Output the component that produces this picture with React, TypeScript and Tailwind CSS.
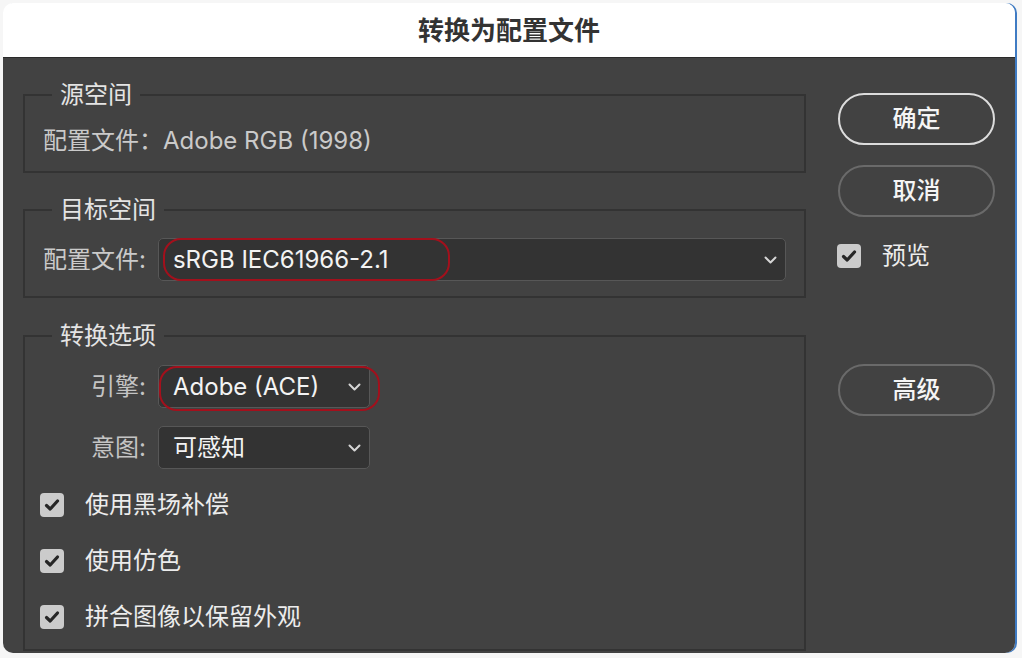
const Chevron = () => (
  <svg width="13" height="8" viewBox="0 0 13 8" fill="none" className="shrink-0">
    <path d="M1.5 1.5 L6.5 6.5 L11.5 1.5" stroke="#d6d6d6" strokeWidth="2" strokeLinecap="round" strokeLinejoin="round" />
  </svg>
);

function Check() {
  return (
    <span className="flex h-[24px] w-[24px] shrink-0 items-center justify-center rounded-[4px] bg-[#cbcbcb]">
      <svg width="16" height="14" viewBox="0 0 16 14" fill="none">
        <path d="M2.5 7.5 L6.2 11 L13.5 3" stroke="#262626" strokeWidth="3.2" strokeLinecap="round" strokeLinejoin="round" />
      </svg>
    </span>
  );
}

function Select({ value, className = "" }: { value: string; className?: string }) {
  return (
    <div className={`flex h-[43px] items-center rounded-[5px] border-[1.5px] border-[#575757] bg-[#333333] pl-[14px] pr-[8px] text-[#f3f3f3] ${className}`}>
      <span className="flex-1 whitespace-nowrap">{value}</span>
      <Chevron />
    </div>
  );
}

function Legend({ children }: { children: React.ReactNode }) {
  return <legend className="ml-[27px] px-2 leading-[26px] text-[#e4e4e4]">{children}</legend>;
}

function CheckRow({ label, className = "" }: { label: string; className?: string }) {
  return (
    <div className={`flex items-center gap-[21px] leading-[26px] text-[#ececec] ${className}`}>
      <Check />
      <span>{label}</span>
    </div>
  );
}

function PillButton({ label, primary }: { label: string; primary?: boolean }) {
  return (
    <button
      className={`flex h-[52px] w-full items-center justify-center rounded-full border-2 font-medium text-[#f5f5f5] ${
        primary ? "border-[#dcdcdc]" : "border-[#6a6a6a]"
      }`}
    >
      {label}
    </button>
  );
}

export default function App() {
  return (
    <div className="h-[658px] w-[1022px] bg-[#f6f6f6] pl-[3px] pt-[3px] font-['Inter','Noto_Sans_CJK_SC',sans-serif] text-[24px]">
      <div className="flex h-[650px] w-[1012px] flex-col overflow-hidden rounded-[10px] shadow-[2px_0_0_#3f7bc3]">
        <div className="flex h-[55px] shrink-0 items-center justify-center border-b border-[#2a2a2a] bg-white">
          <h1 className="text-[26px] font-bold text-[#333]">转换为配置文件</h1>
        </div>

        <div className="flex flex-1 bg-[#424242] px-[20px] pt-[24px]">
          {/* left column */}
          <div className="w-[783px] shrink-0">
            <fieldset className="border-2 border-[#333] pb-[17px]">
              <Legend>源空间</Legend>
              <div className="pl-[18px] pt-[20px] leading-[26px] text-[#cacaca]">配置文件：Adobe RGB (1998)</div>
            </fieldset>

            <fieldset className="mt-[24px] border-2 border-[#333] pb-[15px]">
              <Legend>目标空间</Legend>
              <div className="flex items-center gap-[12px] pl-[18px] pr-[18px] pt-[15px]">
                <span className="leading-[26px] text-[#cacaca]">配置文件:</span>
                <div className="relative flex-1">
                  <Select value="sRGB IEC61966-2.1" />
                  <span className="absolute left-[5px] top-0 h-[43px] w-[287px] rounded-[18px] border-2 border-[#a3101c]" />
                </div>
              </div>
            </fieldset>

            <fieldset className="mt-[25px] border-2 border-[#333] pb-[19px]">
              <Legend>转换选项</Legend>
              <div className="flex items-center pt-[16px]">
                <span className="w-[123px] pr-[2px] text-right leading-[26px] text-[#c4c4c4]">引擎:</span>
                <div className="relative ml-[10px]">
                  <Select value="Adobe (ACE)" className="w-[212px]" />
                  <span className="absolute left-[1px] top-[1px] h-[45px] w-[221px] rounded-[18px] border-2 border-[#a3101c]" />
                </div>
              </div>
              <div className="mt-[18px] flex items-center">
                <span className="w-[123px] pr-[2px] text-right leading-[26px] text-[#c4c4c4]">意图:</span>
                <Select value="可感知" className="ml-[10px] w-[212px]" />
              </div>
              <div className="mt-[23px] flex flex-col gap-[30px] pl-[15px]">
                <CheckRow label="使用黑场补偿" />
                <CheckRow label="使用仿色" />
                <CheckRow label="拼合图像以保留外观" />
              </div>
            </fieldset>
          </div>

          {/* right column */}
          <div className="ml-[32px] flex w-[157px] shrink-0 flex-col pt-[11px]">
            <PillButton label="确定" primary />
            <div className="mt-[20px]">
              <PillButton label="取消" />
            </div>
            <CheckRow label="预览" className="-ml-[1px] mt-[26px]" />
            <div className="mt-[95px]">
              <PillButton label="高级" />
            </div>
          </div>
        </div>
      </div>
    </div>
  );
}
